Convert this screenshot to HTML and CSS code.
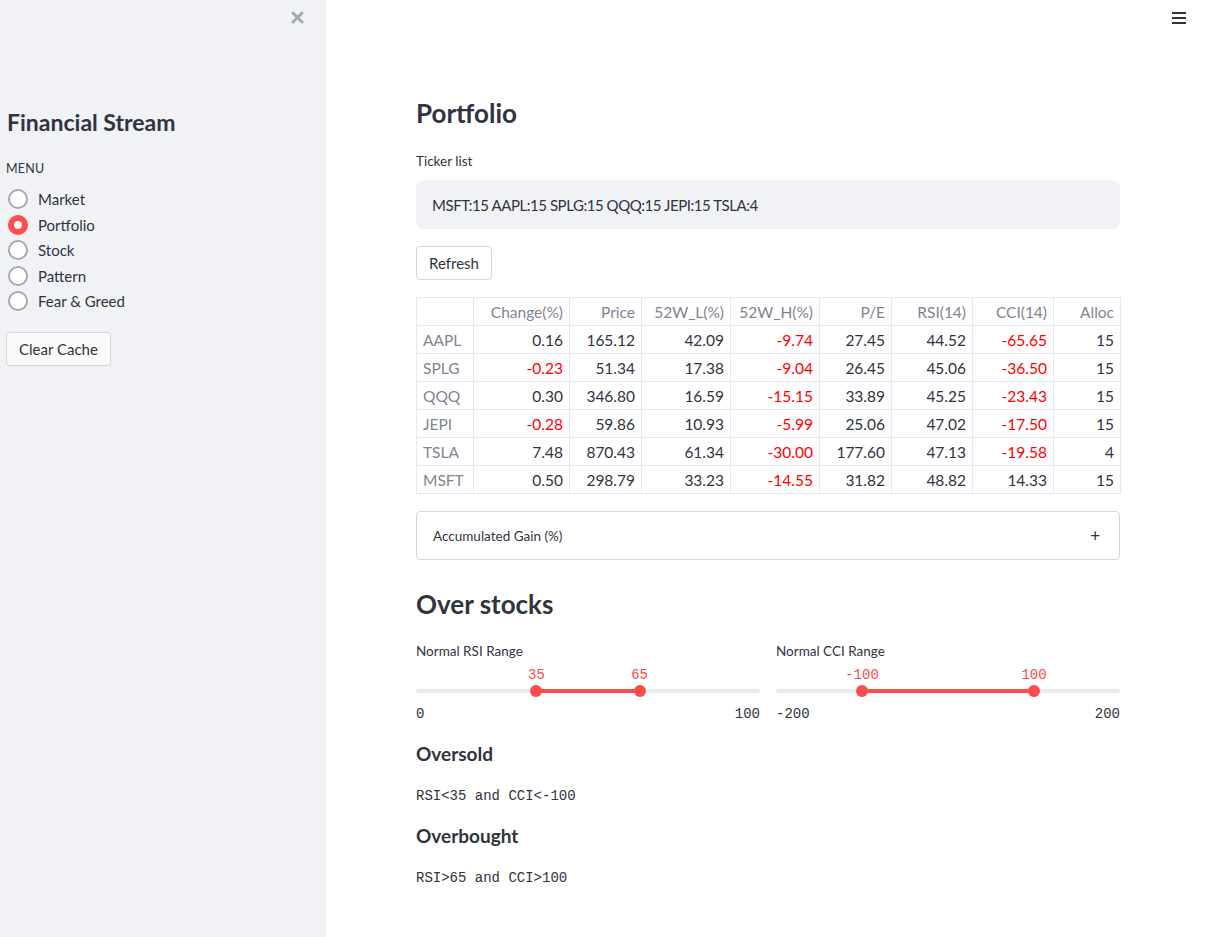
FILE: index.html
```html
<!DOCTYPE html>
<html>
<head>
<meta charset="utf-8">
<link rel="stylesheet" href="styles.css">
</head>
<body>
<aside class="sidebar">
  <div class="close-row">
    <svg class="close" width="13" height="13" viewBox="0 0 13 13"><path d="M2 2 L11 11 M11 2 L2 11" stroke="#a3a8b4" stroke-width="3" stroke-linecap="round"/></svg>
  </div>
  <h1 class="side-title">Financial Stream</h1>
  <div class="menu-label">MENU</div>
  <div class="radios">
    <div class="radio"><span class="dot"></span><span>Market</span></div>
    <div class="radio on"><span class="dot"></span><span>Portfolio</span></div>
    <div class="radio"><span class="dot"></span><span>Stock</span></div>
    <div class="radio"><span class="dot"></span><span>Pattern</span></div>
    <div class="radio"><span class="dot"></span><span>Fear &amp; Greed</span></div>
  </div>
  <button class="btn side-btn">Clear Cache</button>
</aside>
<main class="main">
  <svg class="burger" width="14" height="12" viewBox="0 0 14 12"><rect x="0" y="0" width="14" height="2" fill="#31333f"/><rect x="0" y="5" width="14" height="2" fill="#31333f"/><rect x="0" y="10" width="14" height="2" fill="#31333f"/></svg>
  <div class="content">
    <h2 class="h2 first">Portfolio</h2>
    <div class="label">Ticker list</div>
    <div class="textbox">MSFT:15 AAPL:15 SPLG:15 QQQ:15 JEPI:15 TSLA:4</div>
    <button class="btn refresh">Refresh</button>
    <table class="tbl">
      <thead>
        <tr><th class="idx"></th><th class="c1">Change(%)</th><th class="c2">Price</th><th class="c3">52W_L(%)</th><th class="c4">52W_H(%)</th><th class="c5">P/E</th><th class="c6">RSI(14)</th><th class="c7">CCI(14)</th><th class="c8">Alloc</th></tr>
      </thead>
      <tbody>
        <tr><th class="idx">AAPL</th><td>0.16</td><td>165.12</td><td>42.09</td><td class="neg">-9.74</td><td>27.45</td><td>44.52</td><td class="neg">-65.65</td><td>15</td></tr>
        <tr><th class="idx">SPLG</th><td class="neg">-0.23</td><td>51.34</td><td>17.38</td><td class="neg">-9.04</td><td>26.45</td><td>45.06</td><td class="neg">-36.50</td><td>15</td></tr>
        <tr><th class="idx">QQQ</th><td>0.30</td><td>346.80</td><td>16.59</td><td class="neg">-15.15</td><td>33.89</td><td>45.25</td><td class="neg">-23.43</td><td>15</td></tr>
        <tr><th class="idx">JEPI</th><td class="neg">-0.28</td><td>59.86</td><td>10.93</td><td class="neg">-5.99</td><td>25.06</td><td>47.02</td><td class="neg">-17.50</td><td>15</td></tr>
        <tr><th class="idx">TSLA</th><td>7.48</td><td>870.43</td><td>61.34</td><td class="neg">-30.00</td><td>177.60</td><td>47.13</td><td class="neg">-19.58</td><td>4</td></tr>
        <tr><th class="idx">MSFT</th><td>0.50</td><td>298.79</td><td>33.23</td><td class="neg">-14.55</td><td>31.82</td><td>48.82</td><td>14.33</td><td>15</td></tr>
      </tbody>
    </table>
    <div class="expander"><span>Accumulated Gain (%)</span><span class="plus">+</span></div>
    <h2 class="h2 second">Over stocks</h2>
    <div class="sliders">
      <div class="slider">
        <div class="label">Normal RSI Range</div>
        <div class="track-wrap">
          <div class="track"></div>
          <div class="fill" style="left:35%;width:30%"></div>
          <div class="thumb" style="left:35%"><span class="val">35</span></div>
          <div class="thumb" style="left:65%"><span class="val">65</span></div>
        </div>
        <div class="minmax"><span>0</span><span>100</span></div>
      </div>
      <div class="slider">
        <div class="label">Normal CCI Range</div>
        <div class="track-wrap">
          <div class="track"></div>
          <div class="fill" style="left:25%;width:50%"></div>
          <div class="thumb" style="left:25%"><span class="val">-100</span></div>
          <div class="thumb" style="left:75%"><span class="val">100</span></div>
        </div>
        <div class="minmax"><span>-200</span><span>200</span></div>
      </div>
    </div>
    <h3 class="h3">Oversold</h3>
    <div class="code">RSI&lt;35 and CCI&lt;-100</div>
    <h3 class="h3">Overbought</h3>
    <div class="code">RSI&gt;65 and CCI&gt;100</div>
  </div>
</main>
</body>
</html>
```
FILE: styles.css
```css
* { box-sizing: border-box; }
html, body { margin: 0; padding: 0; }
body {
  display: flex;
  width: 1211px;
  height: 937px;
  overflow: hidden;
  font-family: Lato, "Noto Sans", sans-serif;
  color: #31333f;
  background: #fff;
}
.sidebar {
  width: 326px;
  flex: none;
  height: 937px;
  background: #f0f2f6;
  padding: 0 6px;
}
.close-row {
  display: flex;
  justify-content: flex-end;
  padding: 11px 16px 0 0;
  height: 34px;
}
.side-title {
  margin: 73px 0 0 1px;
  font-size: 23px;
  font-weight: 700;
  line-height: 30px;
}
.menu-label {
  margin-top: 24px;
  font-size: 12.5px;
  line-height: 16px;
  letter-spacing: 0.2px;
}
.radios {
  margin-top: 12px;
  display: flex;
  flex-direction: column;
  gap: 5.5px;
}
.radio {
  display: flex;
  align-items: center;
  gap: 10px;
  font-size: 15px;
  line-height: 20px;
}
.dot {
  width: 20px;
  height: 20px;
  border-radius: 50%;
  border: 2px solid #a3a8b4;
  background: #fff;
  flex: none;
  margin-left: 2px;
}
.radio.on .dot {
  border: 6.5px solid #ff4b4b;
  background: #fff;
}
.btn {
  font-family: Lato, "Noto Sans", sans-serif;
  font-size: 15px;
  color: #31333f;
  background: #fff;
  border: 1px solid #d6d6d9;
  border-radius: 4px;
  padding: 0 12px;
  height: 34px;
  white-space: nowrap;
}
.side-btn {
  margin-top: 21px;
  width: 105px;
  padding: 0;
  background: #fafafa;
}
.main {
  flex: 1;
  position: relative;
  padding-right: 1px;
}
.burger {
  position: absolute;
  top: 12px;
  right: 25px;
}
.content {
  width: 704px;
  margin: 0 auto;
  padding-top: 96px;
}
.h2 {
  margin: 0;
  font-size: 26px;
  font-weight: 700;
  line-height: 34px;
}
.label {
  font-size: 13.5px;
  line-height: 18px;
}
.first + .label { margin-top: 22px; }
.textbox {
  margin-top: 10px;
  height: 49px;
  background: #f0f2f6;
  border-radius: 8px;
  padding: 0 16px;
  display: flex;
  align-items: center;
  font-size: 15px;
  letter-spacing: -0.45px;
}
.refresh {
  margin-top: 17px;
  width: 76px;
  padding: 0;
}
.tbl {
  margin-top: 17px;
  width: 704px;
  border-collapse: collapse;
  font-size: 15.5px;
  table-layout: fixed;
}
.tbl th, .tbl td {
  border: 1px solid #e6e9ef;
  height: 28px;
  padding: 0 6px;
  text-align: right;
  font-weight: 400;
  white-space: nowrap;
}
.tbl thead th { color: #808495; }
.tbl th.idx { text-align: left; color: #808495; width: 57px; }
.tbl td { color: #31333f; }
.tbl td.neg { color: #ff0000; }
.c1 { width: 96px; }
.c2 { width: 72px; }
.c3 { width: 89px; }
.c4 { width: 89px; }
.c5 { width: 72px; }
.c6 { width: 81px; }
.c7 { width: 81px; }
.c8 { width: 67px; }
.expander {
  margin-top: 17px;
  height: 49px;
  border: 1px solid #d6d6d9;
  border-radius: 4px;
  display: flex;
  align-items: center;
  justify-content: space-between;
  padding: 0 19px 0 16px;
  font-size: 13.5px;
}
.plus { font-size: 17px; font-weight: 400; }
.second { margin-top: 27px; }
.sliders {
  margin-top: 21px;
  display: flex;
  gap: 16px;
}
.slider { flex: 1; }
.track-wrap {
  position: relative;
  margin-top: 25px;
  height: 12px;
}
.track {
  position: absolute;
  left: 0; right: 0; top: 4px;
  height: 4px;
  border-radius: 2px;
  background: #e6eaf1;
}
.fill {
  position: absolute;
  top: 4px;
  height: 4px;
  background: #ff4b4b;
}
.thumb {
  position: absolute;
  top: 0;
  width: 12px;
  height: 12px;
  margin-left: -6px;
  border-radius: 50%;
  background: #ff4b4b;
}
.val {
  position: absolute;
  bottom: 13px;
  left: 50%;
  transform: translateX(-50%);
  font-family: "Liberation Mono", monospace;
  font-size: 14px;
  color: #ff4b4b;
  line-height: 18px;
}
.minmax {
  margin-top: 8px;
  display: flex;
  justify-content: space-between;
  font-family: "Liberation Mono", monospace;
  font-size: 14px;
  line-height: 18px;
}
.h3 {
  margin: 18px 0 0;
  font-size: 19px;
  font-weight: 700;
  line-height: 26px;
}
.code {
  margin-top: 20px;
  font-family: "Liberation Mono", monospace;
  font-size: 14px;
  line-height: 18px;
}
```
